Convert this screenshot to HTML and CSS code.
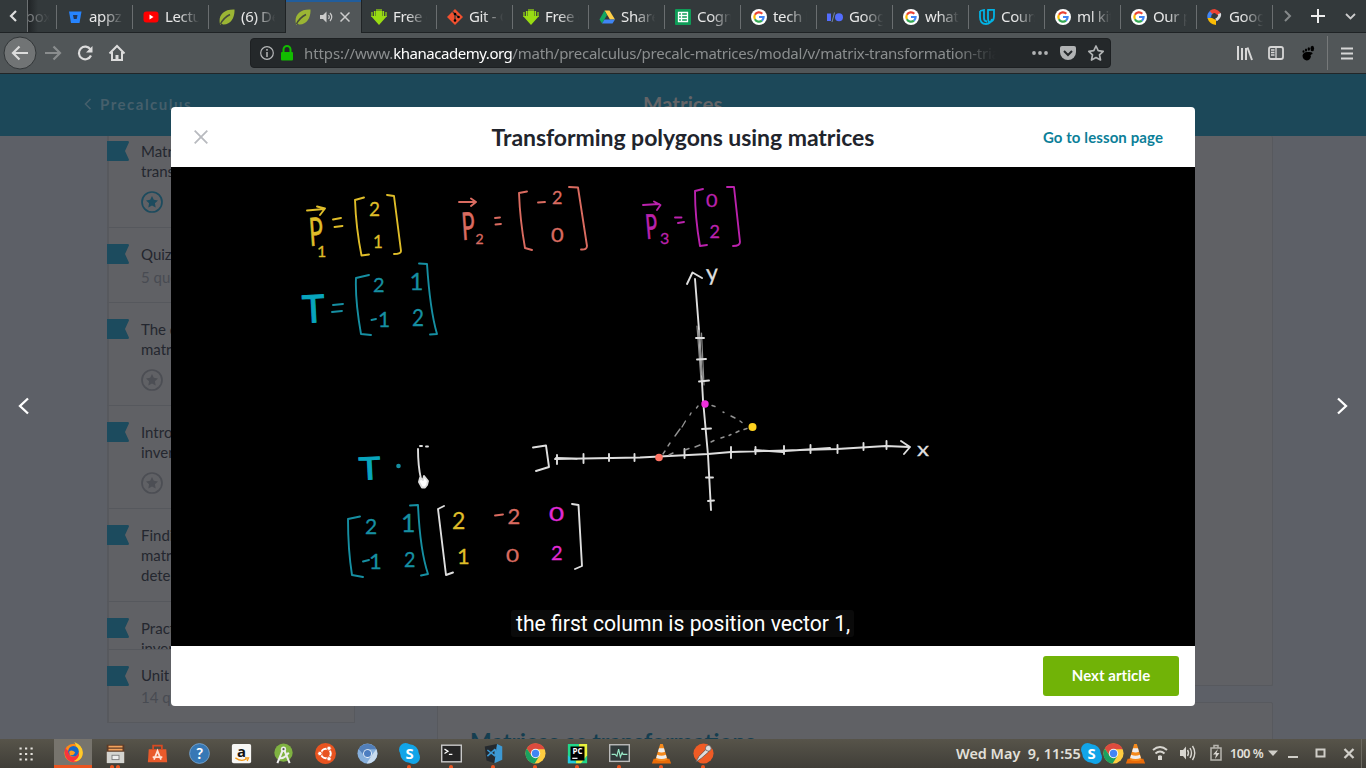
FILE: index.html
```html
<!DOCTYPE html>
<html lang="en">
<head>
<meta charset="utf-8">
<title>Transforming polygons using matrices</title>
<link rel="stylesheet" href="styles.css">
</head>
<body>
<svg class="defs" width="0" height="0">
  <symbol id="leaf" viewBox="0 0 16 16"><path d="M1 15C-1 7 4 0 15.500 0.500C16 8 12 16 4 15.500L2.500 14.500L1.500 16Z" fill="#9bb534"/><path d="M1.500 15C4 10 7 7.500 11 5.500" stroke="#464b3c" stroke-width="1.500" fill="none"/></symbol>
  <symbol id="down" viewBox="0 0 16 16"><path d="M4.500 2H11.500V7H16L8 16L0 7H4.500Z" fill="#99dc13"/><path d="M1 3V8M15 3V8M3.500 2V8M12.500 2V8M6 0V4M8 0V4M10 0V4" stroke="#99dc13" stroke-width="1.200"/></symbol>
  <symbol id="google" viewBox="0 0 16 16"><circle cx="8" cy="8" r="8" fill="#fff"/><g fill="none" stroke-width="2.200"><path d="M11.300 4.700A4.700 4.700 0 0 0 3.900 5.800" stroke="#ea4335"/><path d="M3.900 5.800A4.700 4.700 0 0 0 3.900 10.200" stroke="#fbbc05"/><path d="M3.900 10.200A4.700 4.700 0 0 0 11 11.600" stroke="#34a853"/><path d="M11 11.600A4.700 4.700 0 0 0 12.600 8H8" stroke="#4285f4"/></g></symbol>
  <symbol id="chrome" viewBox="0 0 24 24"><circle cx="12" cy="12" r="11.500" fill="#ffcd40"/><path d="M2 6.300A11.500 11.500 0 0 1 22.500 7H12L8 15Z" fill="#dd4b3e"/><path d="M2 6.300A11.500 11.500 0 0 0 11 23.500L16.500 14.500L8 15Z" fill="#1ba160"/><circle cx="12" cy="12" r="5.400" fill="#f4f4f4"/><circle cx="12" cy="12" r="4.200" fill="#4285f4"/></symbol>
  <symbol id="skype" viewBox="0 0 24 24"><circle cx="7.500" cy="7.500" r="7.500" fill="#12a5e8"/><circle cx="16.500" cy="16.500" r="7.500" fill="#12a5e8"/><circle cx="12" cy="12" r="10.600" fill="#12a5e8"/><text x="12" y="18.500" class="logo-s">S</text></symbol>
  <symbol id="vlc" viewBox="0 0 24 24"><path d="M3 18H21L23 23.500H1Z" fill="#e96b08"/><path d="M10.500 1H13.500L19 19Q12 22 5 19Z" fill="#f58a1c"/><path d="M9.200 6H14.800L16 10Q12 11.500 8 10ZM7 13.500Q12 15.500 17 13.500L18 17Q12 19.500 6 17Z" fill="#eee"/></symbol>
  <symbol id="flag" viewBox="0 0 22 20"><path d="M0 0H20.500Q22.500 0 21.800 1.800L18 10L21.800 18.200Q22.500 20 20.500 20H0Z"/></symbol>
  <symbol id="star" viewBox="0 0 22 22"><circle cx="11" cy="11" r="10" fill="none" stroke="currentColor" stroke-width="1.700"/><path d="M11 5L12.800 8.800L17 9.400L13.900 12.300L14.700 16.500L11 14.500L7.300 16.500L8.100 12.300L5 9.400L9.200 8.800Z" fill="currentColor"/></symbol>
</svg>

<div class="screen">
  <div class="tabs">
    <div class="scroll-left"><svg width="10" height="14" viewBox="0 0 10 14"><path d="M8 2L3 7L8 12" fill="none" stroke="#ddd" stroke-width="2.200"/></svg></div>
    <div class="tab-part"><span>box</span></div>
    <div class="tab"><svg class="fav" viewBox="0 0 16 16"><path d="M2 2.500H14.500L12.500 14H4Z" fill="#2684ff"/><path d="M6 6H10.500L9.700 10H6.800Z" fill="#23375a"/></svg><span>appz</span></div>
    <div class="tab"><svg class="fav" viewBox="0 0 16 16"><rect x="0.500" y="2.500" width="15" height="11" rx="3" fill="#f00"/><path d="M6.500 5.500L10.500 8L6.500 10.500Z" fill="#fff"/></svg><span>Lectu</span></div>
    <div class="tab last"><svg class="fav"><use href="#leaf"/></svg><span>(6) De</span></div>
    <div class="tab active"><svg class="fav"><use href="#leaf"/></svg><svg class="sound" width="14" height="12" viewBox="0 0 14 12"><path d="M0 4H3L6.500 0.500V11.500L3 8H0Z" fill="#ccc"/><path d="M8.500 4Q10 6 8.500 8M10 2Q13.500 6 10 10" fill="none" stroke="#ccc" stroke-width="1.200"/></svg><svg width="10" height="10" viewBox="0 0 10 10"><path d="M0.500 0.500L9.500 9.500M9.500 0.500L0.500 9.500" stroke="#ccc" stroke-width="1.500"/></svg></div>
    <div class="tab"><svg class="fav"><use href="#down"/></svg><span>Free d</span></div>
    <div class="tab"><svg class="fav" viewBox="0 0 16 16"><path d="M8 0L16 8L8 16L0 8Z" fill="#f1502f"/><path d="M5.500 2.500L8 5V11.500M8 5L11.500 8" stroke="#33393b" stroke-width="1.200" fill="none"/><circle cx="8" cy="5" r="1.300"/><circle cx="8" cy="11.500" r="1.300"/><circle cx="11.500" cy="8" r="1.300"/></svg><span>Git - G</span></div>
    <div class="tab"><svg class="fav"><use href="#down"/></svg><span>Free d</span></div>
    <div class="tab"><svg class="fav" viewBox="0 0 16 16"><path d="M5.500 1.500H10.500L16 10.500H11Z" fill="#ffcf48"/><path d="M5.500 1.500L0.500 10.500L3 14.500L8 6Z" fill="#11a861"/><path d="M5.500 10.500H16L13.500 14.500H3Z" fill="#3f85f4"/></svg><span>Share</span></div>
    <div class="tab"><svg class="fav" viewBox="0 0 16 16"><rect width="16" height="16" rx="1" fill="#0f9d58"/><path d="M3.500 3.500H12.500V12.500H3.500ZM3.500 6.500H12.500M3.500 9.500H12.500M6.500 3.500V12.500" fill="none" stroke="#fff" stroke-width="1.300"/></svg><span>Cogni</span></div>
    <div class="tab"><svg class="fav"><use href="#google"/></svg><span>tech l</span></div>
    <div class="tab"><svg class="fav" viewBox="0 0 16 16"><path d="M0 4.500H4V12H0Z" fill="#536dfe"/><path d="M5 13L7.500 3.500" stroke="#7187a8"/><circle cx="12" cy="8.200" r="4" fill="#536dfe"/></svg><span>Goog</span></div>
    <div class="tab"><svg class="fav"><use href="#google"/></svg><span>what i</span></div>
    <div class="tab"><svg class="fav" viewBox="0 0 16 16"><path d="M1 2L5 1V9Q5 12.500 8 12.500M1 2V8Q1 15 7 15Q12 14.500 13 10M9 1L15 0.500V7Q15 13 10 13Q9 12 9 9Z" fill="none" stroke="#02b3e4" stroke-width="1.800"/></svg><span>Cours</span></div>
    <div class="tab"><svg class="fav"><use href="#google"/></svg><span>ml kit</span></div>
    <div class="tab"><svg class="fav"><use href="#google"/></svg><span>Our p</span></div>
    <div class="tab"><svg class="fav" viewBox="0 0 16 16"><g fill="none" stroke-width="4"><path d="M2.500 9A5 5 0 0 1 5 3" stroke="#4285f4"/><path d="M4 3.500Q8 0 12 5" stroke="#ea4335"/><path d="M12.500 4.500Q13.500 8 9 11" stroke="#d9dde0" stroke-width="3"/></g><path d="M0.500 9H5L9 11V16Q2 15 0.500 9Z" fill="#fbbc05"/></svg><span>Goog</span></div>
    <div class="tab-tools">
      <svg width="93" height="32" viewBox="0 0 93 32" fill="none"><path d="M12 11L17 16L12 21" stroke="#85898a" stroke-width="2"/><path d="M45 9V23M38 16H52" stroke="#eee" stroke-width="2"/><path d="M73 14L77.500 18.500L82 14" stroke="#ccc" stroke-width="1.800"/></svg>
    </div>
  </div>

  <div class="toolbar">
    <svg class="nav" width="132" height="40" viewBox="0 33 132 40" fill="none" stroke="#dcdcdc" stroke-width="2.200"><circle cx="20" cy="53" r="16" fill="#717475" stroke="#323638" stroke-width="1"/><path d="M28 53H13M19.500 46.500L13 53L19.500 59.500"/><path d="M45 53H60M53.500 46.500L60 53L53.500 59.500" stroke="#8a8d8e"/><path d="M90.500 49.500A6.300 6.300 0 1 0 91 55.500"/><path d="M92.500 46V52.500H86Z" fill="#dcdcdc" stroke="none"/><path d="M109.500 53.500L117 46L124.500 53.500M112 52V60H122V52" stroke-width="2"/><path d="M117 60V55" stroke-width="3"/></svg>
    <div class="url">
      <svg width="42" height="20" viewBox="259 43 42 20"><circle cx="267" cy="53" r="6.300" fill="none" stroke="#b5b7b8" stroke-width="1.200"/><path d="M267 52V57M267 49V50.700" stroke="#b5b7b8" stroke-width="1.500"/><rect x="281" y="52" width="12" height="8.500" rx="1" fill="#12bc00"/><path d="M283.500 52V49.500A3.500 3.500 0 0 1 290.500 49.500V52" fill="none" stroke="#12bc00" stroke-width="2"/></svg>
      <div class="address"><span class="scheme">https://www.</span><span class="host">khanacademy.org</span><span class="path">/math/precalculus/precalc-matrices/modal/v/matrix-transformation-tria</span></div>
      <svg class="url-tools" width="80" height="20" viewBox="1029 43 80 20"><g fill="#b1b3b4"><circle cx="1034" cy="53" r="1.900"/><circle cx="1040" cy="53" r="1.900"/><circle cx="1046" cy="53" r="1.900"/><path d="M1062 46H1074Q1076 46 1076 48V52A8 8 0 0 1 1060 52V48Q1060 46 1062 46Z"/></g><path d="M1064 51L1068 55L1072 51" stroke="#24282a" stroke-width="2" fill="none"/><path d="M1096 46L1098.200 50.700L1103.200 51.300L1099.500 54.800L1100.500 60L1096 57.500L1091.500 60L1092.500 54.800L1088.800 51.300L1093.800 50.700Z" fill="none" stroke="#b1b3b4" stroke-width="1.700" stroke-linejoin="round"/></svg>
    </div>
    <svg class="tools" width="140" height="40" viewBox="1226 33 140 40" fill="none" stroke="#d6d6d6" stroke-width="2"><path d="M1238 46V60M1242 48V60M1246 48V60M1247.500 47.500L1252 60"/><rect x="1269" y="47" width="14" height="12" rx="2" stroke-width="1.800"/><path d="M1276 47V59M1271 50H1274.500M1271 52.500H1274.500M1271 55H1274.500" stroke-width="1.300"/><g fill="#000" stroke="none"><path d="M1302.500 55.500Q1303.500 51.500 1308 52Q1313 51.500 1312.500 54Q1309.500 55 1311 56.500Q1310 60.500 1306.500 60.500Q1302.500 59.500 1302.500 55.500Z"/><ellipse cx="1312.300" cy="48.500" rx="1.800" ry="2.700"/><ellipse cx="1308.800" cy="49" rx="1.200" ry="1.700"/><ellipse cx="1306" cy="50" rx="1.100" ry="1.500"/><ellipse cx="1303.500" cy="51.500" rx="1" ry="1.300"/></g><path d="M1327.500 36V70" stroke="#76797a" stroke-width="1"/><path d="M1341 48.500H1353M1341 53.500H1353M1341 58.500H1353"/></svg>
  </div>

  <div class="page">
    <div class="page-head"><svg width="8" height="12" viewBox="0 0 8 12"><path d="M6.500 1L1.500 6L6.500 11" fill="none" stroke="#455f6b" stroke-width="1.600"/></svg><span class="crumb">Precalculus</span><span class="unit-title">Matrices</span></div>
    <div class="page-body">
      <div class="sidebar">
        <div class="list">
          <div class="item h103"><svg class="flag"><use href="#flag"/></svg><div>Matrix transformations<svg class="star done"><use href="#star"/></svg></div></div>
          <div class="item h75"><svg class="flag"><use href="#flag"/></svg><div>Quiz 2<p>5 questions</p></div></div>
          <div class="item h103"><svg class="flag"><use href="#flag"/></svg><div>The determinant matrix of a plane<svg class="star"><use href="#star"/></svg></div></div>
          <div class="item h103"><svg class="flag"><use href="#flag"/></svg><div>Introduction to inverse matrices<svg class="star"><use href="#star"/></svg></div></div>
          <div class="item h93"><svg class="flag"><use href="#flag"/></svg><div>Finding inverse matrices with determinants</div></div>
          <div class="item h75"><svg class="flag"><use href="#flag"/></svg><div>Practical uses of inverse matrices</div></div>
        </div>
        <div class="item unit"><svg class="flag"><use href="#flag"/></svg><div>Unit test<p>14 questions</p></div></div>
      </div>
      <div class="cards">
        <div class="card first"></div>
        <div class="card second">Matrices as transformations</div>
      </div>
    </div>
    <svg class="arrow prev" viewBox="0 0 12 18"><path d="M10 1.500L2 9L10 16.500"/></svg>
    <svg class="arrow next" viewBox="0 0 12 18"><path d="M2 1.500L10 9L2 16.500"/></svg>

    <div class="modal">
      <div class="modal-head">
        <svg width="14" height="14" viewBox="0 0 14 14"><path d="M0.700 0.700L13.300 13.300M13.300 0.700L0.700 13.300" stroke="#b8babf" stroke-width="1.800"/></svg>
        <h1>Transforming polygons using matrices</h1>
        <a>Go to lesson page</a>
      </div>
      <div class="video">
        <svg width="1024" height="479" viewBox="171 167 1024 479" class="board">
          <g class="ink yellow">
            <path d="M307 210.500L324 209M317 206.500L325 208.500L320 215M333 219.500L341 218M334.500 227L342.500 226M364 197.500L355 200Q356 228 361.500 255.500L369 254.500M387 195L394 196L401 251Q401 254 394 254"/>
            <text class="vec" transform="translate(310 246) rotate(-4) scale(.6 1)" font-size="39">P</text><text x="317" y="257" font-size="16">1</text>
            <text x="369" y="216" font-size="19">2</text><text x="373" y="248" font-size="17">1</text>
            <text x="452" y="529" font-size="23">2</text><text x="457" y="564" font-size="22">1</text>
          </g>
          <g class="ink red">
            <path d="M459 202H475M471 198.500L476 202L471 206M495 218L500 217.500M495.500 224.500L501 224M527 191.500L519 193Q520 220 525 248L532 250M569 187L578 187.500L587 246Q587 250 581 249.500M538 202.500L545 202M495 515.500L503 514.500"/>
            <text class="vec" transform="translate(462.500 240) rotate(-4) scale(.58 1)" font-size="38">P</text><text x="475.500" y="244" font-size="14">2</text>
            <text x="552" y="204" font-size="18">2</text><text transform="translate(551 242) scale(1.150 1)" font-size="19">0</text>
            <text x="507.500" y="524" font-size="22">2</text><text transform="translate(506 562) scale(1.250 1)" font-size="18">0</text>
          </g>
          <g class="ink magenta">
            <path d="M643 205L659 204M654 201.500L660.500 205L657 210M675 217.500L681.500 217.500M678 223L684 222M703 189L695 191Q695 218 700 246L707 245M727 187L734 187L740 242Q740 246 733 246"/>
            <text class="vec" transform="translate(646.500 239) rotate(-5) scale(.58 1)" font-size="34">P</text><text x="660" y="244" font-size="16">3</text>
            <text transform="translate(706 207) scale(1.100 1)" font-size="18">0</text><text x="709.500" y="238" font-size="18">2</text>
            <g class="bright"><text transform="translate(549 521) scale(1.300 1)" font-size="20">0</text><text x="551" y="560" font-size="20">2</text></g>
          </g>
          <g class="ink teal">
            <path d="M333 305L343 304M332 312L342 311M369 275L356 278Q355 300 361 334L371 335M419 263.500L427 264Q430 310 437 334L430 334.500M371.500 320L376 319M360 516.500L348 519Q348 550 352 575L363 577M410 505.500L418 505Q420 550 428 574L421 575.500M363 561.500L369 560"/>
            <text x="373" y="292" font-size="20">2</text><text x="409.500" y="290" font-size="24">1</text><text x="378" y="327" font-size="21">1</text><text transform="translate(412 326) scale(.900 1)" font-size="23">2</text>
            <text x="365" y="534" font-size="21">2</text><text x="401" y="532" font-size="25">1</text><text x="369" y="569" font-size="22">1</text><text transform="translate(404 567) scale(.900 1)" font-size="22">2</text>
            <text class="tee" transform="translate(303 323) rotate(-3)" font-size="38">T</text><text class="tee" transform="translate(359.500 480) rotate(-3) scale(1.180 1)" font-size="31">T</text><circle cx="398.500" cy="466" r="2.300"/>
          </g>
          <g class="ink white">
            <path d="M687 284L692.500 272.500L702 278M695 279L699 330L703 400L708 455L711 510"/>
            <path class="faint" d="M697 326L701 380M701.500 333L704 385M699 330L702 375"/>
            <path d="M696 338H704M697 359.500L706 359M699 381.500L709 380.500M702 429L711 428.500M706 477.500H713M708 501L714 500.500"/>
            <path d="M555 459L640 457.500L708 454L731 452L800 450L837 449L886 446L909 447M556 458L577 459M755 450L783 452M785 451L830 448M901 441L910 447L904 454"/>
            <path d="M557 455V464M583.500 454V463M609 454V461M634.500 454V461M684.500 449V458M731 447V458M755.500 447V454M784 446V454M810.500 445V453M837.500 445V453M863.500 443V450M886.500 441V449"/>
            <path d="M533 447.500L546 445.500L549 467L536 471M418 449Q418 466 421 479M420 446H422M426 446.500H428M444 506L438 509L446 575L453 572.500M572 504L578.500 505L582 566L575 569"/>
            <text transform="translate(706.500 281) rotate(-3)" font-size="23">y</text><text transform="translate(917 456) scale(1.100 .9)" font-size="22">x</text>
            <path class="dash" d="M698 406L696.500 408M691 413L690 415M685.500 421L682 427M680 429L675 436M670 443L668 446M665 451L663 454M712 405.500L715 406.500M723 412L724 412.500M731 416L735 418M740 421L742 422.500M747 428.500L744 429.500M739 431L736 432.500M731 434.500L729 435.500M724 437L721 438M714 440.500L711 442M700 445L695 447M689 448.500L685 450M673 453L669 455"/>
            <path class="hand" d="M419 482L420 478L423 480L424 476L428 481L427 485L425 487.500H422Z"/>
          </g>
          <circle cx="705" cy="404" r="3.700" fill="#ef2fdc"/><circle cx="752.500" cy="427" r="4" fill="#ffd21f"/><circle cx="659" cy="457.500" r="3.800" fill="#ff7464"/>
        </svg>
        <div class="caption">the first column is position vector 1,</div>
      </div>
      <div class="modal-foot"><button>Next article</button></div>
    </div>
  </div>

  <div class="taskbar">
    <div class="apps">
      <svg class="grid" width="14" height="14" viewBox="0 0 14 14"><path d="M0.500 1.500H14M0.500 7H14M0.500 12.500H14" stroke="#e4e2dc" stroke-width="2.200" stroke-dasharray="2.200 3.300"/></svg>
      <div class="app on"><svg viewBox="0 0 24 24"><circle cx="12" cy="12.500" r="10.500" fill="#ff8a16"/><path d="M3 6Q0 14 5 20Q12 26 19 20Q24 13 19 5Q20 15 12 17Q6 17 7 10Q4 10 3 6Z" fill="#f9343d"/><path d="M13 0Q25 5 22 16Q19 23 12 22Q20 18 18 11Z" fill="#ffcb29"/><circle cx="12" cy="10.500" r="6" fill="#1668c8"/><path d="M7 11Q10 8 14 12Q12 16 8 15Z" fill="#ff9b1b"/></svg></div>
      <div class="app two"><svg viewBox="0 0 24 24"><path d="M2 2H22V22H2Z" fill="#5c3b27"/><path d="M4 4H20M4 7.500H20" stroke="#f2a25c" stroke-width="2"/><path d="M2 10H22V23H2Z" fill="#d4d4d0"/><rect x="8" y="14" width="8" height="5" fill="#eee" stroke="#777"/></svg></div>
      <div class="app"><svg viewBox="0 0 24 24"><path d="M2 7H22L23 22H1Z" fill="#e95a2b"/><path d="M7 8V3H17V8" stroke="#d94a22" stroke-width="2" fill="none"/><path d="M8 19L12 9L16 19M6.500 16H17.500" fill="none" stroke="#ffe2d5" stroke-width="2"/></svg></div>
      <div class="app"><svg viewBox="0 0 24 24"><circle cx="12" cy="12" r="11.300" fill="#3778b5" stroke="#77a6d1"/><text x="12" y="18.500" class="logo-q">?</text></svg></div>
      <div class="app"><svg viewBox="0 0 24 24"><rect x="1" y="1" width="22" height="22" rx="2" fill="#f6f6f4"/><text x="12" y="16" class="logo-a">a</text><path d="M5 17Q12 22 18 18M16 17H20L18.500 20.500" fill="none" stroke="#f49b19" stroke-width="1.500"/></svg></div>
      <div class="app"><svg viewBox="0 0 24 24"><circle cx="12" cy="11" r="10.500" fill="#7fb241"/><path d="M12 6L5 23M12 6L19 23M7 17Q12 19 18 11" stroke="#eee" stroke-width="2.300" fill="none"/><circle cx="12" cy="7" r="3" fill="#eee"/><circle cx="12" cy="7" r="1.200" fill="#555"/></svg></div>
      <div class="app"><svg viewBox="0 0 24 24"><circle cx="12" cy="12" r="12" fill="#e95420"/><circle cx="12.500" cy="12" r="5.500" fill="none" stroke="#fff" stroke-width="2.300"/><g fill="#fff" stroke="#e95420"><circle cx="5.500" cy="12" r="2.500"/><circle cx="16" cy="6" r="2.500"/><circle cx="16" cy="18" r="2.500"/></g></svg></div>
      <div class="app"><svg viewBox="0 0 24 24"><circle cx="12" cy="12" r="11.500" fill="#86afdc"/><path d="M2 7A11.500 11.500 0 0 1 22 7H12L8 14Z" fill="#527fba"/><path d="M22 7A11.500 11.500 0 0 1 11 23.500L17 14Z" fill="#c9dcef"/><circle cx="12" cy="12" r="5" fill="#eef4fb"/><circle cx="12" cy="12" r="4" fill="#4c7dc0"/></svg></div>
      <div class="app dot"><svg><use href="#skype"/></svg></div>
      <div class="app dot"><svg viewBox="0 0 24 24"><rect x="0.800" y="2.500" width="22.400" height="19" fill="#252525" stroke="#c8c8c8" stroke-width="1.600"/><path d="M4 7L8 9.500L4 12M9 13H13" stroke="#fff" stroke-width="1.400" fill="none"/></svg></div>
      <div class="app dot"><svg viewBox="0 0 24 24"><path d="M2 4L16 1L13 23L4 20Z" fill="#24292e"/><path d="M16 1L22 4V19L13 23Z" fill="#3c99d4"/><path d="M14 7L5 15M5 8L14 15M14 7V15" stroke="#3c99d4" stroke-width="1.800"/></svg></div>
      <div class="app dot"><svg><use href="#chrome"/></svg></div>
      <div class="app dot"><svg viewBox="0 0 24 24"><path d="M1 1H20L23 8V23H1Z" fill="#21d789"/><path d="M14 1H23V14L16 23H10Z" fill="#e8f13d"/><path d="M1 14L11 23H1Z" fill="#24c8e0"/><rect x="4" y="4" width="16" height="16" fill="#000"/><text x="12" y="13" class="logo-pc">PC</text><path d="M6 17.500H12" stroke="#fff" stroke-width="1.400"/></svg></div>
      <div class="app dot"><svg viewBox="0 0 24 24"><rect x="0.800" y="2" width="22.400" height="19" fill="#30393a" stroke="#bbb" stroke-width="1.600"/><path d="M3 13H7L9 15L11 7L13 16L15 11L16 13H21" stroke="#98e9c7" stroke-width="1.300" fill="none"/></svg></div>
      <div class="app dot"><svg><use href="#vlc"/></svg></div>
      <div class="app dot"><svg viewBox="0 0 24 24"><circle cx="12" cy="12" r="11.500" fill="#ef5b25"/><path d="M3 22L7 15L15 7L18 10L10 17Z" fill="#ddd" stroke="#444" stroke-width=".700"/><circle cx="17.500" cy="6" r="3.300" fill="#ddd" stroke="#444" stroke-width=".700"/></svg></div>
    </div>
    <div class="tray"><span class="clock">Wed May&nbsp; 9, 11:55</span><svg class="ti"><use href="#skype"/></svg><svg class="ti"><use href="#chrome"/></svg><svg class="ti"><use href="#vlc"/></svg>
      <svg width="78" height="29" viewBox="1147 739 78 29" fill="none" stroke="#d8d6d0" stroke-width="2"><path d="M1153 750Q1160 744 1167 750M1155.500 753.500Q1160 749.500 1164.500 753.500"/><path d="M1158 756Q1160 754.500 1162 756V760H1158Z" fill="#d8d6d0" stroke="none"/><path d="M1180 750H1183L1186 746.500V759.500L1183 756H1180Z" fill="#d8d6d0" stroke="none"/><path d="M1187.500 750Q1189.500 753 1187.500 756M1190 748Q1193 753 1190 758M1192.500 746Q1197 753 1192.500 760" stroke-width="1.400"/><path d="M1211 748H1221V760H1211ZM1214 748V745.500H1218V748" stroke="#b7b5af" stroke-width="1.500"/><path d="M1218 749L1213 754.500H1216L1215 759L1219.500 753H1216.500Z" fill="#d8d6d0" stroke="none"/></svg>
      <span class="pct">100 %</span>
      <svg width="98" height="29" viewBox="1268 739 98 29" fill="none" stroke="#d0cec8" stroke-width="2"><path d="M1268 750.500H1278L1273 756Z" fill="#d0cec8" stroke="none"/><path d="M1288 757H1298"/><rect x="1316.500" y="749.500" width="8" height="7"/><path d="M1344.500 749L1353.500 758M1353.500 749L1344.500 758" stroke-width="2.300"/><path d="M1361.500 739V768" stroke="#6b6961" stroke-width="1"/></svg>
    </div>
  </div>
</div>
</body>
</html>
```
FILE: styles.css
```css
* { box-sizing: border-box; }
body { margin: 0; overflow: hidden; }
.defs { display: none; }
.screen { width: 1366px; height: 768px; display: flex; flex-direction: column; overflow: hidden; font-family: Lato, sans-serif; }
svg { flex: none; }

.tabs { height: 33px; flex: none; display: flex; background: #33393b; border-bottom: 1px solid #1f2325; font: 15px/33px "Noto Sans", sans-serif; color: #e8e8e8; }
.scroll-left { width: 28px; border-right: 1px solid #6d7173; display: flex; align-items: center; padding-left: 8px; }
.tab-part { width: 30px; display: flex; overflow: hidden; position: relative; background: linear-gradient(90deg, #202426, #33393b 10px); }
.tab-part span { margin-left: -2px; color: #777b7d; width: 24px; overflow: hidden; -webkit-mask-image: linear-gradient(90deg, #000 30%, transparent); }
.tab-part::after, .tab::after { content: ""; position: absolute; right: 0; top: 5px; height: 24px; width: 1px; background: #6a6e70; }
.tab { width: 76px; flex: none; display: flex; align-items: center; padding-left: 10px; gap: 6px; position: relative; height: 33px; letter-spacing: -.35px; }
.tab span { width: 35px; overflow: hidden; white-space: nowrap; -webkit-mask-image: linear-gradient(90deg, #000 40%, transparent 98%); }
.tab.last::after, .tab.active::after { display: none; }
.tab.active { width: 75px; margin-left: 1px; padding: 0 0 2px 9px; background: #515658; border-top: 2px solid #215d9c; outline: 1px solid #1f2325; outline-offset: 0; clip-path: inset(0 -1px 0 -1px); height: 33px; gap: 7px; }
.fav { width: 16px; height: 16px; }
.sound { margin-left: 2px; margin-right: -1px; }

.toolbar { height: 41px; flex: none; display: flex; align-items: center; background: #515658; border-bottom: 1px solid #222628; }
.url { margin-left: 118px; width: 861px; height: 30px; flex: none; background: #24282a; border-radius: 4px; border: 1px solid #1d2022; display: flex; align-items: center; padding-left: 8px; }
.address { margin-left: 3px; margin-top: -1px; width: 692px; overflow: hidden; white-space: nowrap; font: 15px/24px "Noto Sans", sans-serif; color: #8b8e8f; -webkit-mask-image: linear-gradient(90deg, #000 94%, transparent); }
.scheme { letter-spacing: -.1px; }
.host { color: #fff; letter-spacing: -.47px; }
.path { letter-spacing: -.25px; }
.url-tools { margin-left: 33px; }
.tools { margin-left: auto; }

.page { flex: 1; min-height: 0; position: relative; background: #5d6067; overflow: hidden; }
.page-head { height: 62px; background: #1c4859; display: flex; align-items: center; padding: 0 0 2px 84px; }
.crumb { margin-left: 8px; font-weight: 700; font-size: 15px; letter-spacing: 1.5px; color: #455f6b; width: 543px; }
.unit-title { font-size: 20.500px; font-weight: 700; color: #646467; }
.page-body { display: flex; }
.sidebar { margin-left: 107px; width: 248px; height: 587px; flex: none; background: #606165; border: 1px solid #57595e; border-left-width: 2px; border-top: 0; }
.list { height: 513px; overflow: hidden; margin-left: -2px; }
.list .item:first-child { margin-top: -11px; }
.item { display: flex; gap: 12px; padding-top: 16px; border-bottom: 1px solid #56585d; font-size: 15px; line-height: 20px; color: #24272f; }
.item > div { width: 130px; }
.item p { margin: 3px 0 0; color: #484b52; }
.h103 { height: 103px; }
.h75 { height: 75px; }
.h93 { height: 93px; }
.unit { margin-left: -2px; border-top: 1px solid #56585d; border-bottom: 0; }
.unit > div { margin-top: -1px; }
.unit p { margin-top: 2px; }
.flag { width: 22px; height: 20px; fill: #1c4b5e; }
.star { display: block; width: 22px; height: 22px; margin-top: 10px; color: #4c4e54; }
.star.done { color: #1c4b5e; }
.cards { margin-left: 82px; width: 836px; }
.card { background: #606165; border: 1px solid #57595e; border-radius: 2px; }
.first { height: 550px; border-top: 0; }
.second { margin-top: 16px; height: 80px; padding: 25px 32px; font-size: 23px; font-weight: 700; line-height: 27px; color: #153e50; }
.arrow { position: absolute; width: 12px; height: 18px; top: 323px; fill: none; stroke: #fff; stroke-width: 2.300; }
.prev { left: 18px; }
.next { left: 1336px; }

.modal { position: absolute; left: 171px; top: 33px; width: 1024px; height: 599px; background: #fff; border-radius: 4px; overflow: hidden; }
.modal-head { height: 60px; display: flex; align-items: center; padding: 0 32px 0 23px; justify-content: space-between; }
.modal-head h1 { margin: 0 0 0 115px; font-size: 23px; letter-spacing: -.05px; font-weight: 700; color: #21242c; }
.modal-head a { font-size: 15px; letter-spacing: .1px; font-weight: 700; color: #0c7f99; }
.video { height: 479px; background: #000; position: relative; }
.board { display: block; }
.ink path { fill: none; stroke: currentColor; stroke-width: 1.900; stroke-linecap: round; stroke-linejoin: round; }
.ink text { fill: currentColor; font-family: Lato, sans-serif; font-weight: 400; stroke: currentColor; stroke-width: .3; }
.ink .vec { stroke-width: .6; }
.ink circle { fill: currentColor; }
.ink .tee { fill: #08a5bd; stroke: #08a5bd; stroke-width: 1; }
.yellow { color: #dfbd29; }
.red { color: #da6b60; }
.magenta { color: #bb22ad; }
.bright { color: #e02bd5; }
.teal { color: #168fa2; }
.white { color: #dedede; }
.ink .faint { stroke: #8c8c8c; stroke-width: 1.200; }
.ink .dash { stroke: #929292; stroke-width: 1.400; }
.ink .hand { fill: #fff; }
.caption { position: absolute; left: 340px; top: 443px; height: 27px; width: 343px; padding-left: 5px; border-radius: 3px; background: #0a0a0a; color: #fff; font: 21.150px/27px Roboto, sans-serif; white-space: nowrap; }
.modal-foot { height: 60px; display: flex; justify-content: flex-end; padding: 10px 16px; }
.modal-foot button { width: 136px; height: 40px; padding: 0 0 2px; border: 0; border-radius: 3px; background: #71b307; color: #fff; font: 700 15px Lato, sans-serif; letter-spacing: .05px; }

.taskbar { height: 29px; flex: none; display: flex; justify-content: space-between; background: linear-gradient(#57544a, #403e38); }
.apps { display: flex; align-items: center; }
.grid { margin: 0 12px 0 19px; }
.app { width: 42px; height: 29px; display: flex; align-items: center; justify-content: center; position: relative; }
.app svg { width: 21px; height: 21px; margin-top: -1px; }
.on { width: 38px; margin: 0 2px 0 9px; background: #77746d; border-bottom: 3px solid #e95420; }
.app.on svg { margin-top: 1px; }
.dot::after, .two::after { content: ""; position: absolute; bottom: 0; left: 19px; width: 4px; height: 3px; border-radius: 2px 2px 0 0; background: #e95420; }
.two::after { left: 16px; box-shadow: 6px 0 #e95420; }
.tray { display: flex; align-items: center; color: #e2e0da; font: 600 14px "Noto Sans", sans-serif; }
.clock { width: 125px; white-space: nowrap; font-size: 14.400px; }
.ti { width: 21px; height: 21px; margin-right: 1px; }
.pct { width: 38px; margin-left: 5px; font-size: 12.500px; letter-spacing: -.5px; white-space: nowrap; }
.logo-s { font: 700 17px "Open Sans", sans-serif; fill: #fff; text-anchor: middle; }
.logo-q { font: 700 18px Lato, sans-serif; fill: #fff; text-anchor: middle; }
.logo-a { font: 700 17px "Open Sans", sans-serif; fill: #111; text-anchor: middle; }
.logo-pc { font: 700 9px "Open Sans", sans-serif; fill: #fff; text-anchor: middle; }
```
